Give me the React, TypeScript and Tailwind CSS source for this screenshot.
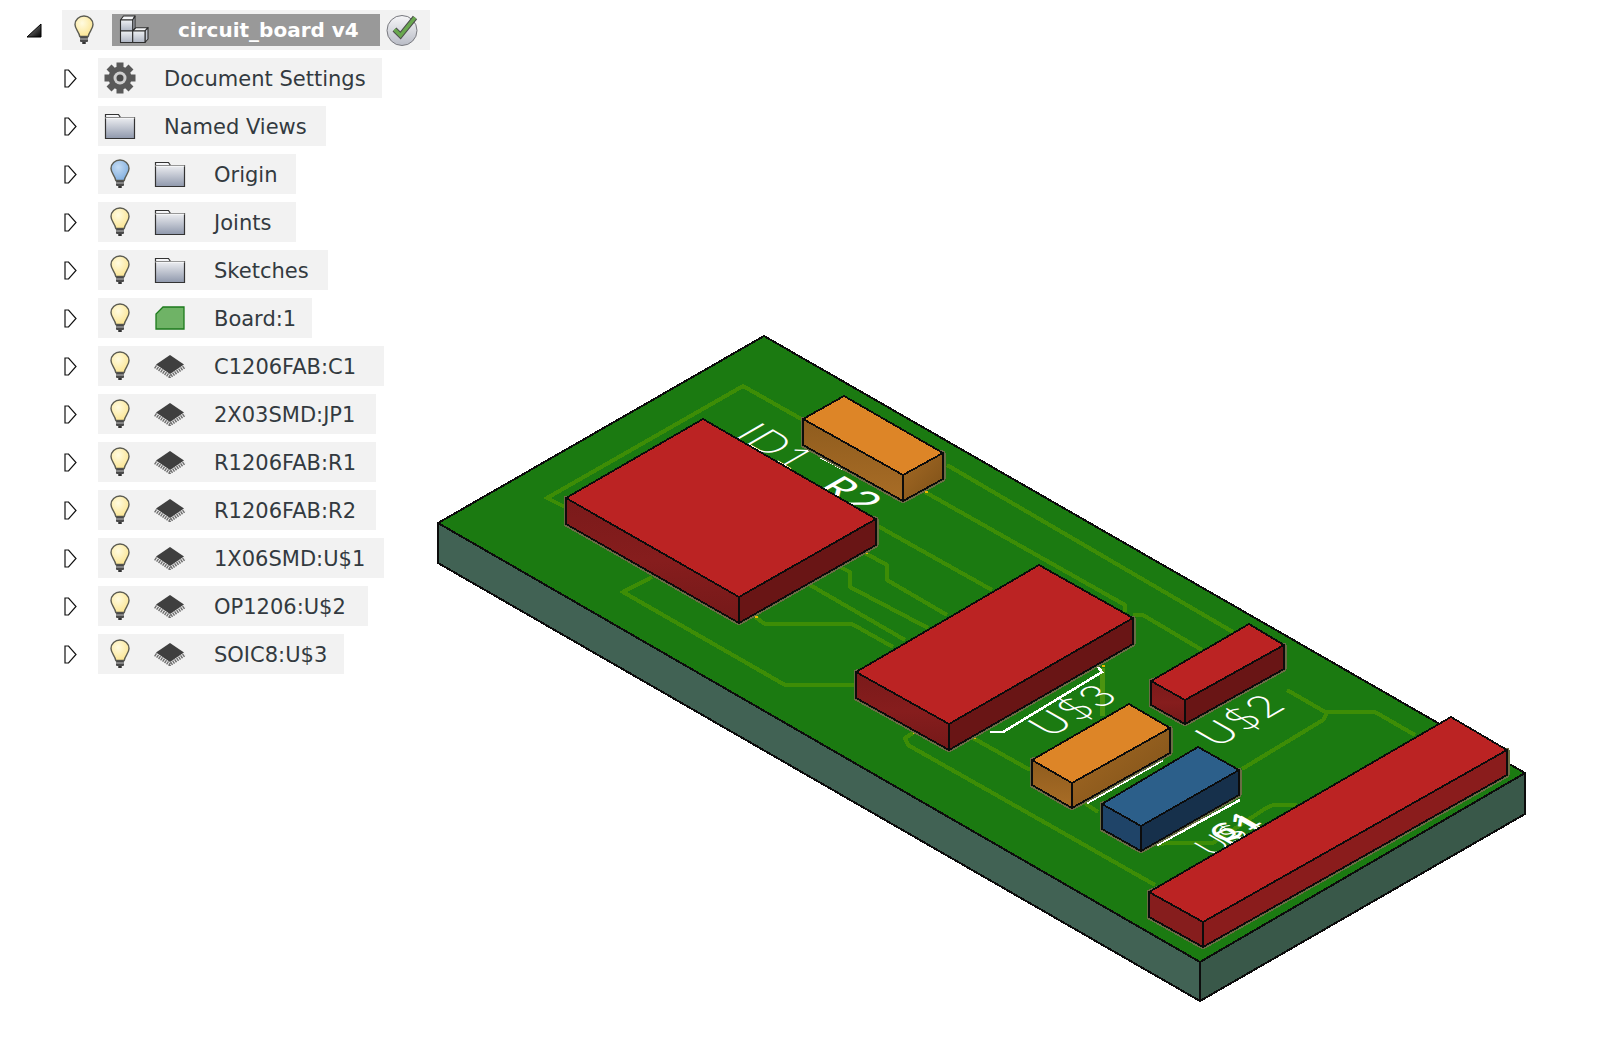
const rows = [
  { label: "Document Settings", icon: "gear", width: "w-[284px]" },
  { label: "Named Views", icon: "folder", width: "w-[228px]" },
  { label: "Origin", icon: "folder", bulb: "blue", width: "w-[198px]" },
  { label: "Joints", icon: "folder", bulb: "yellow", width: "w-[198px]" },
  { label: "Sketches", icon: "folder", bulb: "yellow", width: "w-[230px]" },
  { label: "Board:1", icon: "board", bulb: "yellow", width: "w-[214px]" },
  { label: "C1206FAB:C1", icon: "chip", bulb: "yellow", width: "w-[286px]" },
  { label: "2X03SMD:JP1", icon: "chip", bulb: "yellow", width: "w-[278px]" },
  { label: "R1206FAB:R1", icon: "chip", bulb: "yellow", width: "w-[278px]" },
  { label: "R1206FAB:R2", icon: "chip", bulb: "yellow", width: "w-[278px]" },
  { label: "1X06SMD:U$1", icon: "chip", bulb: "yellow", width: "w-[286px]" },
  { label: "OP1206:U$2", icon: "chip", bulb: "yellow", width: "w-[270px]" },
  { label: "SOIC8:U$3", icon: "chip", bulb: "yellow", width: "w-[246px]" },
]

const Bulb = ({ blue }: { blue?: boolean }) => {
  const id = blue ? "bulbBlue" : "bulbYellow"
  return (
    <svg width="20" height="30" viewBox="0 0 20 30" className="block">
      <defs>
        <radialGradient id={id} cx="0.4" cy="0.35" r="0.7">
          <stop offset="0" stopColor={blue ? "#c4dcf4" : "#fffbe0"} />
          <stop offset="1" stopColor={blue ? "#7fadde" : "#fbe48f"} />
        </radialGradient>
      </defs>
      <path d="M10 1C5 1 1 4.800 1 9.500c0 4.600 3.800 6.800 4.800 12h8.400c1-5.200 4.800-7.400 4.800-12C19 4.800 15 1 10 1z" fill={`url(#${id})`} stroke="#5c5c52" strokeWidth="1.400" />
      <rect x="6" y="21.500" width="8" height="5.500" rx="1" fill="#4a4a4a" />
      <rect x="6" y="23.500" width="8" height="1" fill="#bbb" />
      <rect x="8" y="27" width="4" height="2" rx="1" fill="#333" />
    </svg>
  )
}

const Folder = () => (
  <svg width="32" height="28" viewBox="0 0 32 28" className="block">
    <defs>
      <linearGradient id="folderFill" x1="0" y1="0" x2="0" y2="1">
        <stop offset="0" stopColor="#fbfbfc" />
        <stop offset="1" stopColor="#8f98ac" />
      </linearGradient>
    </defs>
    <path d="M1.500 2.500h13l2 3h14v21h-29z" fill="url(#folderFill)" stroke="#333" strokeWidth="1.200" />
    <path d="M1.500 6h29" stroke="#fff" strokeWidth="1" />
    <path d="M1.500 5.500h15" stroke="#888" strokeWidth="1" />
  </svg>
)

const Gear = () => (
  <svg width="32" height="32" viewBox="0 0 32 32" className="block">
    {[0, 45, 90, 135, 180, 225, 270, 315].map((deg) => (
      <rect key={deg} x="12.500" y="0.500" width="7" height="7" fill="#595959" transform={`rotate(${deg} 16 16)`} />
    ))}
    <circle cx="16" cy="16" r="11.500" fill="#595959" />
    <circle cx="16" cy="16" r="6.500" fill="#cfcfcf" />
    <circle cx="16" cy="16" r="3.500" fill="#4a4a4a" />
  </svg>
)

const BoardIcon = () => (
  <svg width="30" height="24" viewBox="0 0 30 24" className="block">
    <path d="M8 1h21v22H1V8z" fill="#6fb366" stroke="#1c7a1c" strokeWidth="1.300" />
  </svg>
)

const ChipIcon = () => (
  <svg width="32" height="24" viewBox="0 0 32 24" className="block">
    <path d="M1 12.500L16 22.500 31 12.500" fill="none" stroke="#6e6e6e" strokeWidth="3.500" strokeDasharray="1.400 1" />
    <path d="M16 1l14 9.500-14 9.500-14-9.500z" fill="#3f3f3f" />
  </svg>
)

const ComponentIcon = () => (
  <svg width="30" height="30" viewBox="0 0 30 30" className="block">
    <defs>
      <linearGradient id="boxFill" x1="0" y1="0" x2="0" y2="1">
        <stop offset="0" stopColor="#eef0f3" />
        <stop offset="1" stopColor="#aeb5c3" />
      </linearGradient>
    </defs>
    <g stroke="#2e2e2e" strokeWidth="1.100" strokeLinejoin="round">
      <polygon points="1.500,5 4.500,1 16,1 13.700,5" fill="#f6f7f9" />
      <polygon points="13.700,5 16,1 16,13 13.700,16" fill="#c5cad4" />
      <rect x="1.500" y="5" width="12.200" height="11" fill="url(#boxFill)" />
      <rect x="1.500" y="16" width="12.200" height="11.500" fill="url(#boxFill)" />
      <polygon points="13.700,16 17,12.700 29,12.700 26,16" fill="#f6f7f9" />
      <polygon points="26,16 29,12.700 29,24 26,27.500" fill="#c5cad4" />
      <rect x="13.700" y="16" width="12.300" height="11.500" fill="url(#boxFill)" />
    </g>
  </svg>
)

const CheckBadge = () => (
  <svg width="34" height="34" viewBox="0 0 34 34" className="block">
    <defs>
      <linearGradient id="badgeFill" x1="0" y1="0" x2="0" y2="1">
        <stop offset="0" stopColor="#f6f6f8" />
        <stop offset="1" stopColor="#b9bcc6" />
      </linearGradient>
    </defs>
    <circle cx="17" cy="17.500" r="15" fill="url(#badgeFill)" stroke="#77787e" strokeWidth="1" />
    <path d="M9.500 16.500l6 6L30 4.500" fill="none" stroke="#4d4d4d" strokeWidth="5.500" />
    <path d="M9.500 16.500l6 6L30 4.500" fill="none" stroke="#69a84f" strokeWidth="3.500" />
  </svg>
)

const ExpandArrow = () => (
  <svg width="13" height="19" viewBox="0 0 13 19" className="block">
    <path d="M1 1h3.500L12 9.500 4.500 18H1z" fill="#fff" stroke="#111" strokeWidth="1.200" />
  </svg>
)

const TreeRow = ({ row }: { row: (typeof rows)[number] }) => (
  <div className="flex items-center">
    <div className="ml-[64px] w-[34px]">
      <ExpandArrow />
    </div>
    <div className={`flex h-10 items-center bg-[#f2f2f2] ${row.width} ${row.bulb ? "pl-[12px]" : "pl-[6px]"}`}>
      {row.bulb && (
        <div className="mr-[24px] w-5">
          <Bulb blue={row.bulb === "blue"} />
        </div>
      )}
      <div className="flex w-8 justify-center">
        {row.icon === "gear" && <Gear />}
        {row.icon === "folder" && <Folder />}
        {row.icon === "board" && <BoardIcon />}
        {row.icon === "chip" && <ChipIcon />}
      </div>
      <span className="ml-[28px] whitespace-nowrap pt-[3px] text-[21px] text-[#333a40]">
        {row.label}
      </span>
    </div>
  </div>
)

type Pt = [number, number]

const pts = (list: Pt[]) => list.map((p) => p.join(",")).join(" ")

const Box = ({ t, l, r, f, h, top, left, right }: { t: Pt; l: Pt; r: Pt; f: Pt; h: number; top: string; left: string; right: string }) => {
  const low = (p: Pt): Pt => [p[0], p[1] + h]
  return (
    <g stroke="#0c0c0c" strokeWidth="1.800" strokeLinejoin="round">
      <polygon points={pts([l, low(l), low(f), low(r), r])} fill="none" stroke="#6a6d45" strokeWidth="5" />
      <polygon points={pts([t, r, f, l])} fill={top} />
      <polygon points={pts([l, f, low(f), low(l)])} fill={left} />
      <polygon points={pts([f, r, low(r), low(f)])} fill={right} />
    </g>
  )
}

const traces: Pt[][] = [
  [[565, 507], [547, 498], [743, 386], [803, 420]],
  [[652, 577], [623, 592], [785, 685], [855, 685]],
  [[755, 617], [765, 624], [852, 624], [893, 647]],
  [[810, 585], [905, 640]],
  [[840, 567], [850, 572], [850, 587], [928, 628]],
  [[865, 553], [887, 565], [887, 580], [947, 615]],
  [[876, 525], [992, 590]],
  [[925, 492], [1125, 605], [1125, 612]],
  [[947, 465], [1233, 632]],
  [[1133, 615], [1143, 615], [1202, 650]],
  [[913, 733], [905, 738], [908, 745], [1155, 885]],
  [[973, 738], [1030, 770]],
  [[1083, 802], [1098, 812]],
  [[1158, 845], [1166, 843], [1213, 843], [1263, 810], [1273, 805], [1297, 805]],
  [[1242, 769], [1323, 720], [1327, 713], [1287, 690]],
  [[1327, 712], [1375, 712], [1415, 735]],
]

const pins: Pt[] = [[755, 617], [865, 553], [925, 492], [913, 733], [973, 738], [1083, 802], [1102, 666]]

const BoardDrawing = () => (
  <svg width="1110" height="690" viewBox="430 325 1110 690" className="mt-[325px] block shrink-0" shapeRendering="crispEdges">
    <defs>
      <linearGradient id="redLeft" x1="0" y1="0" x2="0" y2="1">
        <stop offset="0" stopColor="#7a1a1a" />
        <stop offset="0.500" stopColor="#861d1d" />
        <stop offset="1" stopColor="#741919" />
      </linearGradient>
      <linearGradient id="orangeLeft" x1="0" y1="0" x2="0" y2="1">
        <stop offset="0" stopColor="#8f5c1e" />
        <stop offset="1" stopColor="#a96d26" />
      </linearGradient>
      <linearGradient id="orangeRight" x1="0" y1="0" x2="1" y2="1">
        <stop offset="0" stopColor="#a56a24" />
        <stop offset="1" stopColor="#7d5018" />
      </linearGradient>
    </defs>

    <polygon points={pts([[438, 523], [1200, 962], [1200, 1001], [438, 563]])} fill="#416254" stroke="#0c0c0c" strokeWidth="2" />
    <polygon points={pts([[1200, 962], [1525, 773], [1525, 814], [1200, 1001]])} fill="#395849" stroke="#0c0c0c" strokeWidth="2" />
    <polygon points={pts([[764, 336], [438, 523], [1200, 962], [1525, 773]])} fill="#1b7a11" stroke="#0c0c0c" strokeWidth="2" />

    {traces.map((t, i) => (
      <polyline key={i} points={pts(t)} fill="none" stroke="#3d8d06" strokeWidth="4" />
    ))}
    <path d="M1102 668V716" stroke="#4b9410" strokeWidth="5" />
    {pins.map((p, i) => (
      <rect key={i} x={p[0]} y={p[1] - 1} width="3" height="2" fill="#e6b800" />
    ))}

    <g fill="#ffffff" fontFamily="Lato, sans-serif" fontWeight="300" fontSize="42" letterSpacing="1" shapeRendering="auto">
      <text transform="matrix(0.866 0.5 -0.866 0.5 733 436)">ID1</text>
      <text transform="matrix(0.866 0.5 -0.866 0.5 815 489)" fontWeight="400">R2</text>
      <text transform="matrix(0.866 -0.5 0.866 0.5 1050 738)">U$3</text>
      <text transform="matrix(0.866 -0.5 0.866 0.5 1217 748)">U$2</text>
      <text transform="matrix(0.866 -0.5 0.866 0.5 1212 857)" fontSize="34">U$1</text>
      <text transform="matrix(0.866 -0.5 0.866 0.5 1226 844)" fontSize="34" fontWeight="400">C1</text>
      <text transform="matrix(0.866 -0.5 0.866 0.5 1232 848)" fontSize="34" fontWeight="400">R1</text>
    </g>
    <g fill="none" stroke="#ffffff" strokeWidth="2.500">
      <polyline points="990,732 1003,732 1102,672 1098,667" />
      <path d="M1087 803L1163 760M1157 845L1240 800M820 457L883 490" />
    </g>

    <Box t={[703, 419]} l={[566, 498]} r={[876, 519]} f={[739, 597]} h={26} top="#bb2323" left="url(#redLeft)" right="#691515" />
    <Box t={[844, 396]} l={[803, 419]} r={[943, 453]} f={[903, 475]} h={26} top="#dd8527" left="url(#orangeLeft)" right="url(#orangeRight)" />
    <Box t={[1039, 565]} l={[856, 672]} r={[1133, 618]} f={[949, 724]} h={26} top="#bb2323" left="url(#redLeft)" right="#691515" />
    <Box t={[1249, 624]} l={[1151, 681]} r={[1284, 645]} f={[1185, 700]} h={24} top="#bb2323" left="url(#redLeft)" right="#691515" />
    <Box t={[1129, 704]} l={[1032, 760]} r={[1170, 728]} f={[1072, 783]} h={25} top="#dd8527" left="url(#orangeLeft)" right="url(#orangeRight)" />
    <Box t={[1198, 747]} l={[1102, 804]} r={[1239, 770]} f={[1141, 826]} h={25} top="#2c5f8a" left="#1f4468" right="#16304b" />
    <Box t={[1451, 717]} l={[1149, 892]} r={[1507, 750]} f={[1203, 922]} h={25} top="#bb2323" left="#861d1d" right="#8a1c1c" />
  </svg>
)

export default function App() {
  return (
    <div className="flex h-[1054px] w-[1598px] overflow-hidden bg-white font-['DejaVu_Sans',sans-serif]">
      <div className="flex w-[430px] shrink-0 flex-col gap-2 pt-[10px]">
        <div className="flex h-10 items-center">
          <svg width="16" height="15" viewBox="0 0 16 15" className="ml-[26px] block">
            <defs>
              <linearGradient id="collapse" x1="0" y1="0" x2="1" y2="1">
                <stop offset="0" stopColor="#999" />
                <stop offset="1" stopColor="#000" />
              </linearGradient>
            </defs>
            <path d="M15 1v13H1z" fill="url(#collapse)" stroke="#000" strokeWidth="1" />
          </svg>
          <div className="ml-[20px] flex h-10 w-[368px] items-center bg-[#f2f2f2] pl-[12px]">
            <Bulb />
            <div className="ml-[18px] flex h-8 w-[268px] items-center bg-[#999999] pl-[7px]">
              <ComponentIcon />
              <span className="ml-[29px] whitespace-nowrap text-[20px] font-bold text-white">circuit_board v4</span>
            </div>
            <div className="ml-[5px]">
              <CheckBadge />
            </div>
          </div>
        </div>
        {rows.map((row) => (
          <TreeRow key={row.label} row={row} />
        ))}
      </div>
      <BoardDrawing />
    </div>
  )
}
